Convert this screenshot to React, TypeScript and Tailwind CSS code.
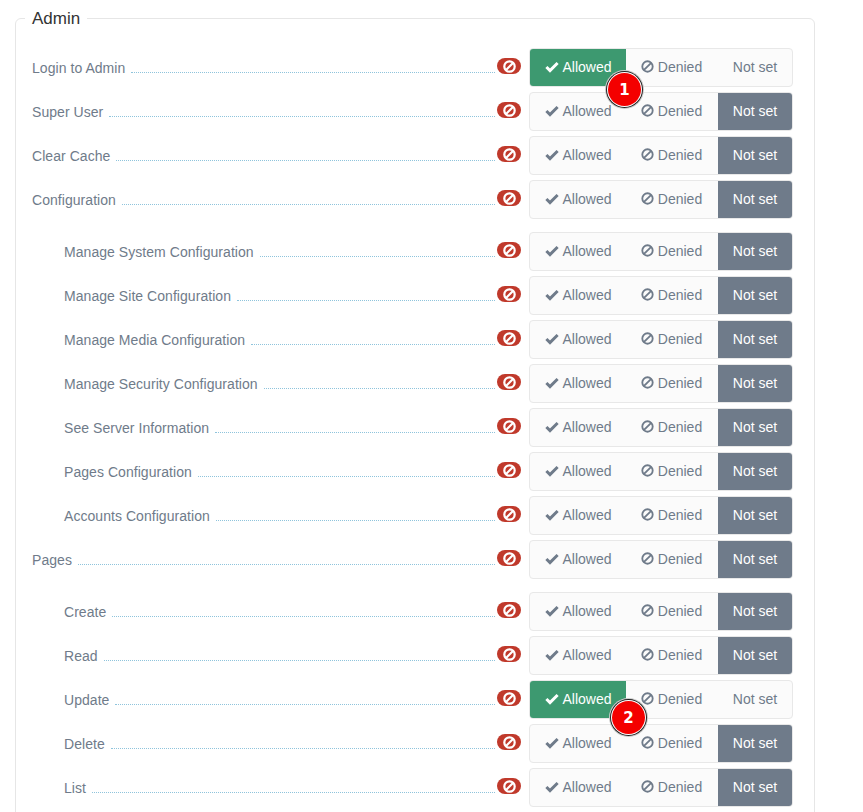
interface PermissionRowProps {
  label: string;
  value?: "allowed" | "notset";
  child?: boolean;
  gapBefore?: boolean;
  marker?: string;
  markerClass?: string;
}

const rows: PermissionRowProps[] = [
  { label: "Login to Admin", value: "allowed", marker: "1", markerClass: "left-[78px] top-[24px]" },
  { label: "Super User" },
  { label: "Clear Cache" },
  { label: "Configuration" },
  { label: "Manage System Configuration", child: true, gapBefore: true },
  { label: "Manage Site Configuration", child: true },
  { label: "Manage Media Configuration", child: true },
  { label: "Manage Security Configuration", child: true },
  { label: "See Server Information", child: true },
  { label: "Pages Configuration", child: true },
  { label: "Accounts Configuration", child: true },
  { label: "Pages" },
  { label: "Create", child: true, gapBefore: true },
  { label: "Read", child: true },
  { label: "Update", child: true, value: "allowed", marker: "2", markerClass: "left-[82px] top-[20px]" },
  { label: "Delete", child: true },
  { label: "List", child: true },
];

function BanIcon({ size = 13, weight = 2 }: { size?: number; weight?: number }) {
  return (
    <svg width={size} height={size} viewBox="0 0 14 14" fill="none" stroke="currentColor" strokeWidth={weight}>
      <circle cx="7" cy="7" r="5.6" />
      <path d="M3 11 11 3" />
    </svg>
  );
}

function CheckIcon() {
  return (
    <svg width="14" height="12" viewBox="0 0 14 12" fill="none" stroke="currentColor" strokeWidth="3">
      <path d="M1.4 6 5 9.6 12.6 2" />
    </svg>
  );
}

function PermissionRow({ label, value = "notset", child, gapBefore, marker, markerClass }: PermissionRowProps) {
  const allowed = value === "allowed";

  return (
    <div className={`flex h-[44px] ${gapBefore ? "mt-2" : ""}`}>
      <div className={`flex h-[39px] w-[489px] items-center ${child ? "pl-[32px]" : ""}`}>
        <span className="shrink-0 pt-[1px] text-[14px] leading-[20px] tracking-[0.05px] text-[#6f7b8a]">{label}</span>
        <span className="ml-[6px] mr-[2px] mt-[10px] flex-1 border-b border-dotted border-[#8fc4dc]" />
        <span className="mb-[3px] flex h-[16px] w-[24px] shrink-0 items-center justify-center rounded-[8px] bg-[#c0392b] text-white">
          <BanIcon weight={2.4} />
        </span>
      </div>
      <div className="relative ml-[8px] flex h-[39px] w-[264px] shrink-0 rounded-[4px] border border-[#e8e8e8] bg-[#fbfbfb] text-[14px] leading-[20px] text-[#6f7b8a]">
        <div className={`flex w-[96px] items-center justify-center gap-[3px] rounded-l-[3px] pb-[2px] pl-[1px] ${allowed ? "bg-[#3d9970] text-white" : ""}`}>
          <CheckIcon />
          <span>Allowed</span>
        </div>
        <div className="flex w-[92px] items-center justify-center gap-[4px] pb-[2px] pr-[1px]">
          <BanIcon />
          <span>Denied</span>
        </div>
        <div className={`flex w-[74px] items-center justify-center rounded-r-[3px] pb-[2px] ${allowed ? "" : "bg-[#6f7b8a] text-white"}`}>
          Not set
        </div>
        {marker && (
          <div className={`absolute z-10 flex h-[33px] w-[33px] items-center justify-center rounded-full bg-[#f40000] font-['DejaVu_Sans',sans-serif] text-[15px] font-bold text-white shadow-[0_0_0_1px_#fff,0_0_0_2px_#222,0_0_0_3px_#ccc] ${markerClass}`}>
            {marker}
          </div>
        )}
      </div>
    </div>
  );
}

export default function App() {
  return (
    <div className="h-[812px] overflow-hidden bg-white pl-[15px] pt-[7px] font-['Liberation_Sans',Arial,sans-serif]">
      <fieldset className="w-[800px] rounded-[6px] border border-[#e6e6e6] pb-[60px] pl-[16px] pt-[19px]">
        <legend className="ml-[-7px] px-[7px] pt-[2px] text-[17px] leading-[20px] text-[#333]">Admin</legend>
        {rows.map((row) => (
          <PermissionRow key={row.label} {...row} />
        ))}
      </fieldset>
    </div>
  );
}
